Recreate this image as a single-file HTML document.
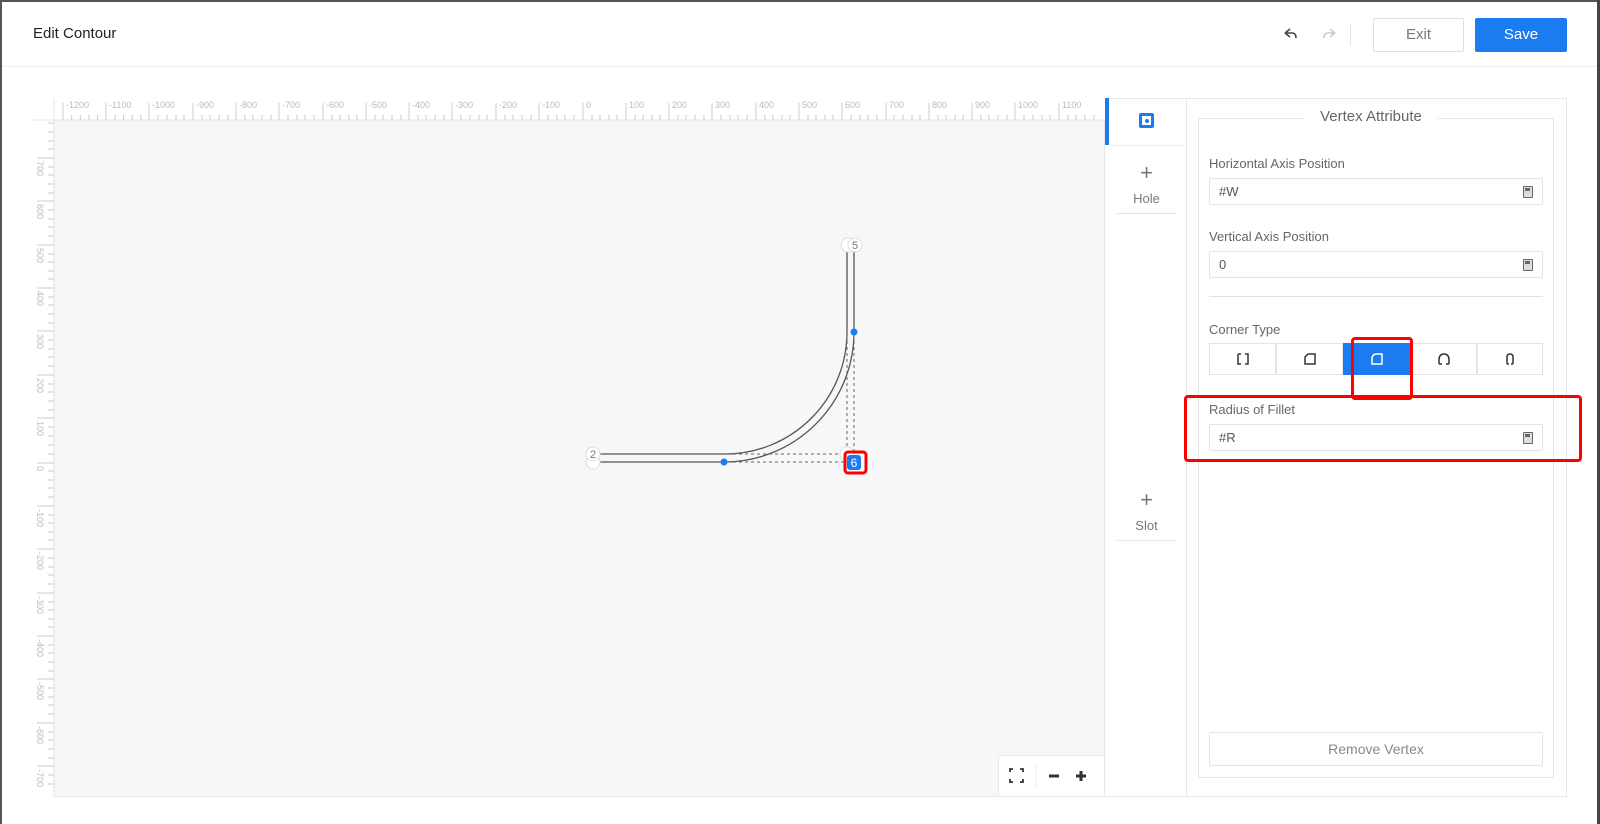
<!DOCTYPE html>
<html><head><meta charset="utf-8"><style>
*{box-sizing:border-box;margin:0;padding:0}
body{width:1600px;height:824px;overflow:hidden;background:#fff;font-family:"Liberation Sans",sans-serif;position:relative}
.a{position:absolute}
.lbl{position:absolute;left:1209px;font-size:13px;color:#666}
.inp{position:absolute;left:1209px;width:334px;height:27px;border:1px solid #e4e4e4;border-radius:2px;font-size:13px;color:#555;padding:5px 0 0 9px}
.calc{position:absolute;right:9px;top:7px;width:10px;height:12px;border:1.5px solid #666;border-radius:1px;background:#ddd}
.calc:before{content:"";position:absolute;left:1px;top:1px;width:5px;height:3px;background:#666}
.btn{position:absolute;top:343px;height:32px;width:67px;border:1px solid #e4e4e4;display:flex;align-items:center;justify-content:center}
</style></head><body>
<div class="a" style="left:0;top:0;width:1600px;height:2px;background:#555"></div>
<div class="a" style="left:0;top:0;width:2px;height:824px;background:#555"></div>
<div class="a" style="left:1597px;top:0;width:3px;height:824px;background:#444"></div>
<div class="a" style="left:33px;top:25px;font-size:15px;color:#222;">Edit Contour</div>
<div class="a" style="left:2px;top:66px;width:1595px;height:1px;background:#eee"></div>
<svg class="a" style="left:1282px;top:26px" width="60" height="16"><path d="M3 7 L8 3 M3 7 L8 11 M3 7 H10 Q14 7 14 12" stroke="#444" stroke-width="1.6" fill="none"/><path d="M53 7 L48 3 M53 7 L48 11 M53 7 H46 Q42 7 42 12" stroke="#ccc" stroke-width="1.6" fill="none"/></svg>
<div class="a" style="left:1350px;top:24px;width:1px;height:22px;background:#e4e4e4"></div>
<div class="a" style="left:1373px;top:18px;width:91px;height:34px;border:1px solid #e0e0e0;border-radius:2px;color:#777;font-size:15px;text-align:center;line-height:32px">Exit</div>
<div class="a" style="left:1475px;top:18px;width:92px;height:34px;background:#1a7cf0;border-radius:2px;color:#fff;font-size:15px;text-align:center;line-height:34px">Save</div>

<!-- canvas -->
<div class="a" style="left:32px;top:98px;width:1073px;height:699px;background:#f7f7f7;border:1px solid #e8e8e8"></div>
<svg class="a" style="left:32px;top:98px" width="1073" height="699">
<rect x="0" y="0" width="1073" height="22" fill="#fff"/><rect x="0" y="0" width="22" height="699" fill="#fff"/>
<line x1="0" y1="22" x2="1073" y2="22" stroke="#e6e6e6"/><line x1="22" y1="0" x2="22" y2="699" stroke="#e6e6e6"/>
</svg>

<!-- shape -->
<svg class="a" style="left:0;top:0" width="1105" height="797">
<g stroke="#555" stroke-width="1.3" fill="none">
<path d="M593 462 H724 A130 130 0 0 0 854 332 V245"/>
<path d="M593 454 H725 A122 122 0 0 0 847 332 V245"/>
</g>
<g stroke="#666" stroke-width="1" stroke-dasharray="3,3" fill="none">
<path d="M847 335 V462 M854 335 V462 M727 454 H854 M727 462 H854"/>
</g>
<circle cx="724" cy="462" r="3.5" fill="#1a7cf0"/><circle cx="854" cy="332" r="3.5" fill="#1a7cf0"/>
<g font-size="11" fill="#777" font-family="Liberation Sans" text-anchor="middle">
<circle cx="593" cy="462" r="7" fill="#fff" stroke="#ddd"/><circle cx="593" cy="454" r="7" fill="#fff" stroke="#ddd"/><text x="593" y="458">2</text>
<circle cx="848" cy="245" r="7" fill="#fff" stroke="#ddd"/><circle cx="855" cy="245" r="7" fill="#fff" stroke="#ddd"/><text x="855" y="249">5</text>
<circle cx="847" cy="454" r="7" fill="#fff" stroke="#ddd"/>
</g>
<rect x="847" y="455" width="14" height="15" rx="3" fill="#1a7cf0"/>
<text x="854" y="467" font-size="12" fill="#fff" text-anchor="middle" font-family="Liberation Sans">6</text>
<rect x="845" y="452" width="21" height="21" rx="3" fill="none" stroke="#f00" stroke-width="3"/>
</svg>

<!-- zoom controls -->
<div class="a" style="left:998px;top:755px;width:107px;height:42px;background:#fff;border:1px solid #e8e8e8"></div>
<svg class="a" style="left:998px;top:755px" width="107" height="42"><path d="M12 17 V14 H15 M22 14 H25 V17 M25 24 V27 H22 M15 27 H12 V24" stroke="#333" stroke-width="1.8" fill="none"/><line x1="38" y1="10" x2="38" y2="32" stroke="#eee"/><path d="M51 21 H61" stroke="#333" stroke-width="3"/><path d="M78 21 H88 M83 16 V26" stroke="#333" stroke-width="3"/></svg>

<!-- tabs -->
<div class="a" style="left:1105px;top:98px;width:81px;height:699px;background:#fff;border-top:1px solid #e8e8e8;border-bottom:1px solid #e8e8e8"></div>
<div class="a" style="left:1105px;top:98px;width:4px;height:47px;background:#1a7cf0"></div>
<div class="a" style="left:1109px;top:145px;width:77px;height:1px;background:#eee"></div>
<div class="a" style="left:1139px;top:113px;width:15px;height:15px;border:3px solid #1a7cf0;border-radius:2px"><div style="position:absolute;left:2.5px;top:2.5px;width:4px;height:4px;background:#1a7cf0;border-radius:50%"></div></div>
<div class="a" style="left:1117px;top:162px;width:59px;text-align:center;color:#777;font-size:22px;font-weight:200;line-height:22px">+</div>
<div class="a" style="left:1117px;top:191px;width:59px;text-align:center;color:#777;font-size:13px">Hole</div>
<div class="a" style="left:1117px;top:213px;width:59px;height:1px;background:#e4e4e4"></div>
<div class="a" style="left:1117px;top:489px;width:59px;text-align:center;color:#777;font-size:22px;font-weight:200;line-height:22px">+</div>
<div class="a" style="left:1117px;top:518px;width:59px;text-align:center;color:#777;font-size:13px">Slot</div>
<div class="a" style="left:1117px;top:540px;width:59px;height:1px;background:#e4e4e4"></div>

<!-- right panel -->
<div class="a" style="left:1186px;top:98px;width:381px;height:699px;border:1px solid #e8e8e8"></div>
<div class="a" style="left:1198px;top:118px;width:356px;height:660px;border:1px solid #e8e8e8"></div>
<div class="a" style="left:1305px;top:108px;width:132px;background:#fff;text-align:center;font-size:15px;color:#666">Vertex Attribute</div>
<div class="lbl" style="top:156px">Horizontal Axis Position</div>
<div class="inp" style="top:178px">#W<div class="calc"></div></div>
<div class="lbl" style="top:229px">Vertical Axis Position</div>
<div class="inp" style="top:251px">0<div class="calc"></div></div>
<div class="a" style="left:1209px;top:296px;width:334px;height:1px;background:#e0e0e0"></div>
<div class="lbl" style="top:322px">Corner Type</div>
<div class="btn" style="left:1209px"><svg width="14" height="14"><path d="M2 2H5 M9 2H12V12H9 M5 12H2V2" stroke="#333" stroke-width="1.5" fill="none"/></svg></div>
<div class="btn" style="left:1276px"><svg width="14" height="14"><path d="M5 2H12V12H2V5Z" stroke="#333" stroke-width="1.5" fill="none"/></svg></div>
<div class="btn" style="left:1343px;background:#1a7cf0;border-color:#1a7cf0"><svg width="14" height="14"><path d="M7 2H12V12H2V7Q2 2 7 2" stroke="#fff" stroke-width="1.5" fill="none"/></svg></div>
<div class="btn" style="left:1410px"><svg width="14" height="14"><path d="M2 12V8Q2 2 7 2Q12 2 12 8V12 M2 12H5 M9 12H12" stroke="#333" stroke-width="1.5" fill="none"/></svg></div>
<div class="btn" style="left:1477px;width:66px"><svg width="14" height="14"><path d="M4 12V5Q4 2 7 2Q10 2 10 5V12 M4 12H6 M8 12H10" stroke="#333" stroke-width="1.5" fill="none"/></svg></div>
<div class="lbl" style="top:402px">Radius of Fillet</div>
<div class="inp" style="top:424px">#R<div class="calc"></div></div>
<div class="a" style="left:1209px;top:732px;width:334px;height:34px;border:1px solid #e4e4e4;border-radius:2px;text-align:center;line-height:32px;font-size:14px;color:#888">Remove Vertex</div>
<div class="a" style="left:1351px;top:337px;width:62px;height:63px;border:3px solid #f00;border-radius:4px"></div>
<div class="a" style="left:1184px;top:395px;width:398px;height:67px;border:3px solid #f00;border-radius:4px"></div>

<svg class="a" style="left:32px;top:98px" width="1073" height="699">
<g stroke="#ccc" stroke-width="1">
<path d="
M31 5V22 M74 5V22 M117 5V22 M161 5V22 M204 5V22 M247 5V22 M291 5V22 M334 5V22 M377 5V22 M420 5V22 M464 5V22 M507 5V22 M551 5V22 M594 5V22 M637 5V22 M680 5V22 M724 5V22 M767 5V22 M810 5V22 M854 5V22 M897 5V22 M940 5V22 M983 5V22 M1027 5V22
M5 60H22 M5 103H22 M5 147H22 M5 190H22 M5 233H22 M5 277H22 M5 320H22 M5 365H22 M5 408H22 M5 451H22 M5 495H22 M5 538H22 M5 581H22 M5 625H22 M5 668H22"/>
</g>
</svg>
<svg class="a" style="left:32px;top:98px" width="1073" height="699" font-family="Liberation Sans" font-size="9" fill="#bbb">
<text x="34" y="10">-1200</text><text x="77" y="10">-1100</text><text x="120" y="10">-1000</text><text x="164" y="10">-900</text><text x="207" y="10">-800</text><text x="250" y="10">-700</text><text x="294" y="10">-600</text><text x="337" y="10">-500</text><text x="380" y="10">-400</text><text x="423" y="10">-300</text><text x="467" y="10">-200</text><text x="510" y="10">-100</text><text x="554" y="10">0</text><text x="597" y="10">100</text><text x="640" y="10">200</text><text x="683" y="10">300</text><text x="727" y="10">400</text><text x="770" y="10">500</text><text x="813" y="10">600</text><text x="857" y="10">700</text><text x="900" y="10">800</text><text x="943" y="10">900</text><text x="986" y="10">1000</text><text x="1030" y="10">1100</text>
<g transform="rotate(90)">
<text x="63" y="-5">700</text><text x="106" y="-5">600</text><text x="150" y="-5">500</text><text x="193" y="-5">400</text><text x="236" y="-5">300</text><text x="280" y="-5">200</text><text x="323" y="-5">100</text><text x="368" y="-5">0</text><text x="411" y="-5">-100</text><text x="454" y="-5">-200</text><text x="498" y="-5">-300</text><text x="541" y="-5">-400</text><text x="584" y="-5">-500</text><text x="628" y="-5">-600</text><text x="671" y="-5">-700</text>
</g>
<path stroke="#ccc" d="M39.7 17V22M48.3 17V22M57 17V22M65.6 17V22M83 17V22M91.6 17V22M100.3 17V22M109 17V22M126 17V22M135 17V22M144 17V22M152 17V22M170 17V22M178 17V22M187 17V22M196 17V22M213 17V22M221 17V22M230 17V22M239 17V22M256 17V22M265 17V22M273 17V22M282 17V22M300 17V22M308 17V22M317 17V22M325 17V22M343 17V22M351 17V22M360 17V22M369 17V22M386 17V22M394 17V22M403 17V22M412 17V22M429 17V22M438 17V22M447 17V22M455 17V22M473 17V22M481 17V22M490 17V22M499 17V22M516 17V22M525 17V22M533 17V22M542 17V22M560 17V22M568 17V22M577 17V22M585 17V22M603 17V22M611 17V22M620 17V22M628 17V22M646 17V22M654 17V22M663 17V22M672 17V22M689 17V22M698 17V22M706 17V22M715 17V22M733 17V22M741 17V22M750 17V22M758 17V22M776 17V22M784 17V22M793 17V22M801 17V22M819 17V22M828 17V22M836 17V22M845 17V22M862 17V22M871 17V22M880 17V22M888 17V22M906 17V22M914 17V22M923 17V22M931 17V22M949 17V22M957 17V22M966 17V22M975 17V22M992 17V22M1001 17V22M1010 17V22M1018 17V22M1036 17V22M1044 17V22M1053 17V22M1062 17V22"/>
<path stroke="#ccc" d="M16 25H22M16 34H22M16 43H22M16 51H22M16 69H22M16 77H22M16 86H22M16 95H22M16 112H22M16 121H22M16 129H22M16 138H22M16 156H22M16 164H22M16 173H22M16 181H22M16 199H22M16 207H22M16 216H22M16 225H22M16 242H22M16 251H22M16 259H22M16 268H22M16 286H22M16 294H22M16 303H22M16 312H22M16 329H22M16 338H22M16 347H22M16 356H22M16 373H22M16 382H22M16 390H22M16 399H22M16 417H22M16 425H22M16 434H22M16 442H22M16 460H22M16 469H22M16 477H22M16 486H22M16 504H22M16 512H22M16 521H22M16 529H22M16 547H22M16 555H22M16 564H22M16 573H22M16 590H22M16 599H22M16 607H22M16 616H22M16 634H22M16 642H22M16 651H22M16 660H22M16 677H22M16 686H22"/>
</svg>
</body></html>
